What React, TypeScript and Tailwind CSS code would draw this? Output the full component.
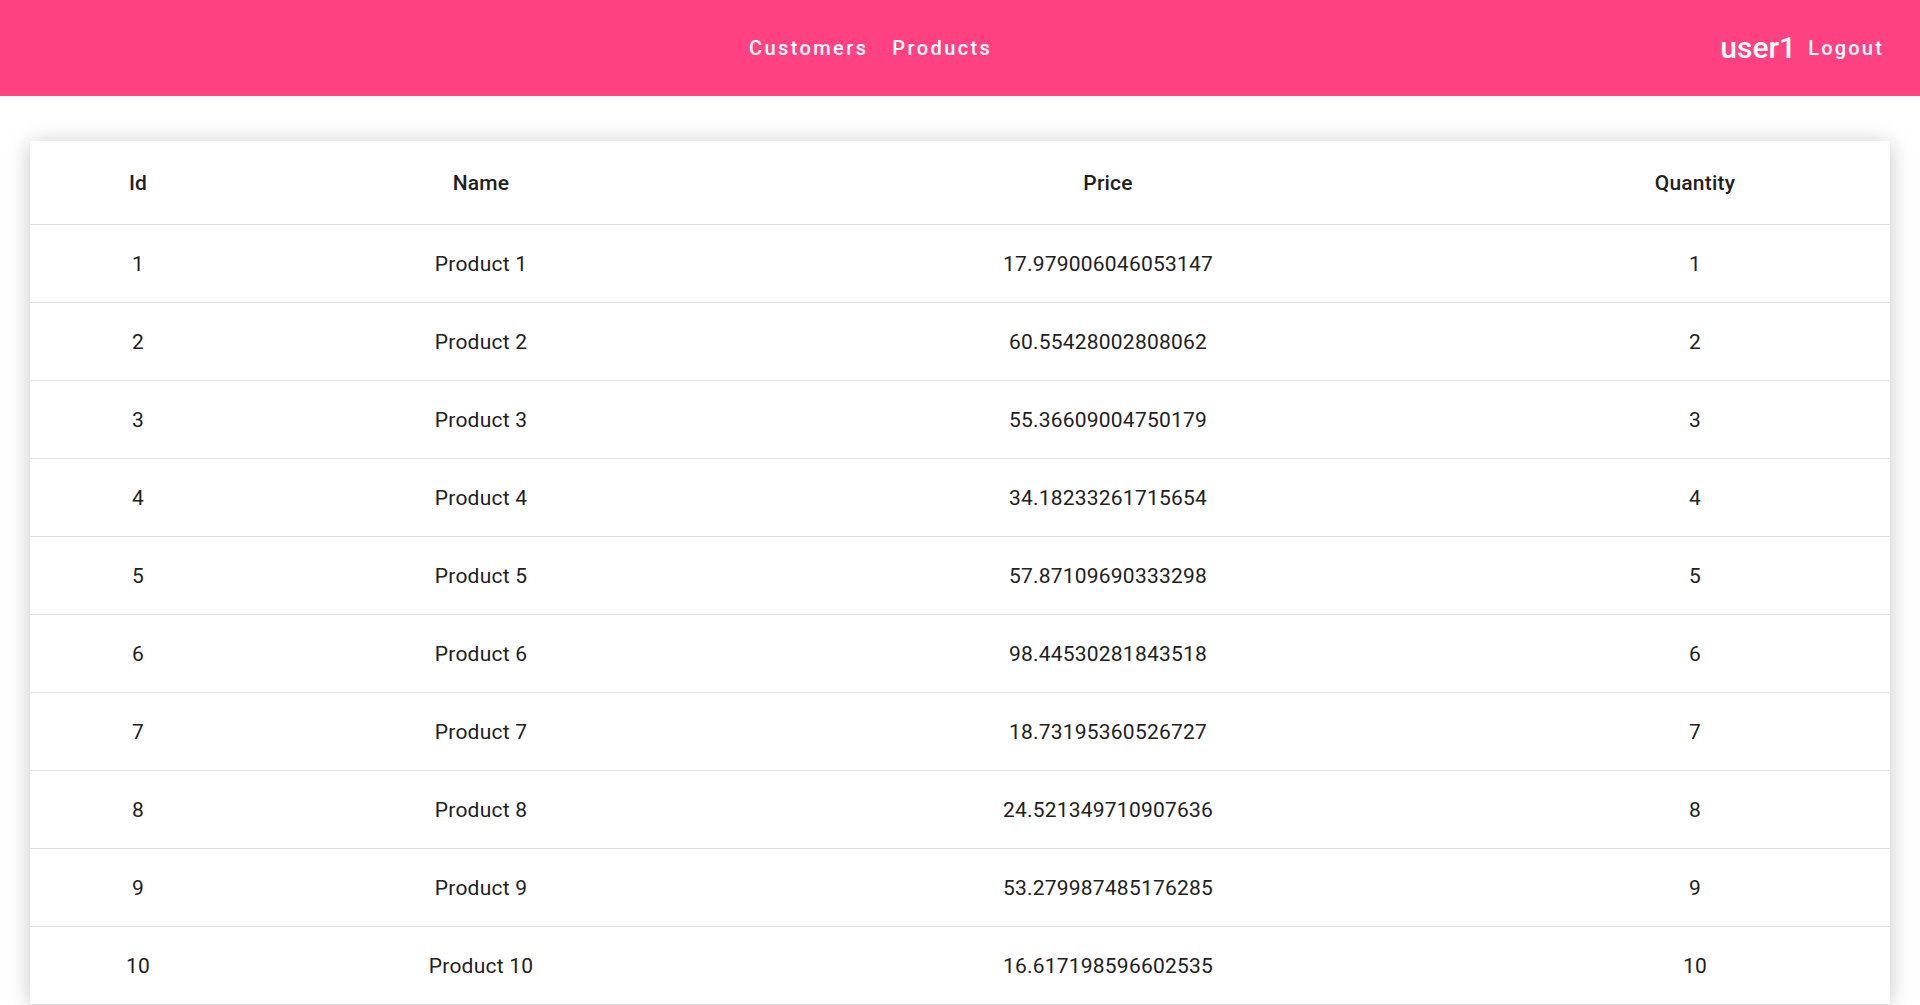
import React from 'react';

const products = [
    { id: 1, name: 'Product 1', price: '17.979006046053147', quantity: 1 },
    { id: 2, name: 'Product 2', price: '60.55428002808062', quantity: 2 },
    { id: 3, name: 'Product 3', price: '55.36609004750179', quantity: 3 },
    { id: 4, name: 'Product 4', price: '34.18233261715654', quantity: 4 },
    { id: 5, name: 'Product 5', price: '57.87109690333298', quantity: 5 },
    { id: 6, name: 'Product 6', price: '98.44530281843518', quantity: 6 },
    { id: 7, name: 'Product 7', price: '18.73195360526727', quantity: 7 },
    { id: 8, name: 'Product 8', price: '24.521349710907636', quantity: 8 },
    { id: 9, name: 'Product 9', price: '53.279987485176285', quantity: 9 },
    { id: 10, name: 'Product 10', price: '16.617198596602535', quantity: 10 },
];

const Header: React.FC = () => (
    <header className="h-[96px] bg-[#ff4081] flex items-center px-[30px] text-white">
        <div className="w-[719px] shrink-0" />
        <nav className="flex items-center gap-[24px] text-[20px] font-medium tracking-[0.12em]">
            <a href="#">Customers</a>
            <a href="#">Products</a>
        </nav>
        <div className="flex-1 flex items-center justify-end gap-[12px] pr-[6px]">
            <span className="text-[30px] font-medium leading-none">user1</span>
            <a href="#" className="text-[20px] font-medium tracking-[0.11em]">Logout</a>
        </div>
    </header>
);

export default function App() {
    return (
        <div className="min-h-screen bg-white text-[#212121]" style={{ fontFamily: 'Roboto, "Liberation Sans", sans-serif' }}>
            <Header />
            <main className="px-[30px] pt-[45px]">
                <div className="bg-white shadow-[0_2px_22px_rgba(0,0,0,0.22)]">
                    <table className="w-full table-fixed border-collapse text-[21px] text-center tracking-[0.01em]">
                        <colgroup>
                            <col className="w-[216px]" />
                            <col className="w-[470px]" />
                            <col className="w-[784px]" />
                            <col />
                        </colgroup>
                        <thead>
                            <tr className="border-b border-[#e0e0e0]">
                                <th className="h-[83px] pt-[2px] font-medium">Id</th>
                                <th className="h-[83px] pt-[2px] font-medium">Name</th>
                                <th className="h-[83px] pt-[2px] font-medium">Price</th>
                                <th className="h-[83px] pt-[2px] font-medium">Quantity</th>
                            </tr>
                        </thead>
                        <tbody>
                            {products.map(p => (
                                <tr key={p.id} className="border-b border-[#e0e0e0]">
                                    <td className="h-[78px] pt-[3px]">{p.id}</td>
                                    <td className="h-[78px] pt-[3px]">{p.name}</td>
                                    <td className="h-[78px] pt-[3px]">{p.price}</td>
                                    <td className="h-[78px] pt-[3px]">{p.quantity}</td>
                                </tr>
                            ))}
                        </tbody>
                    </table>
                </div>
            </main>
        </div>
    );
}
